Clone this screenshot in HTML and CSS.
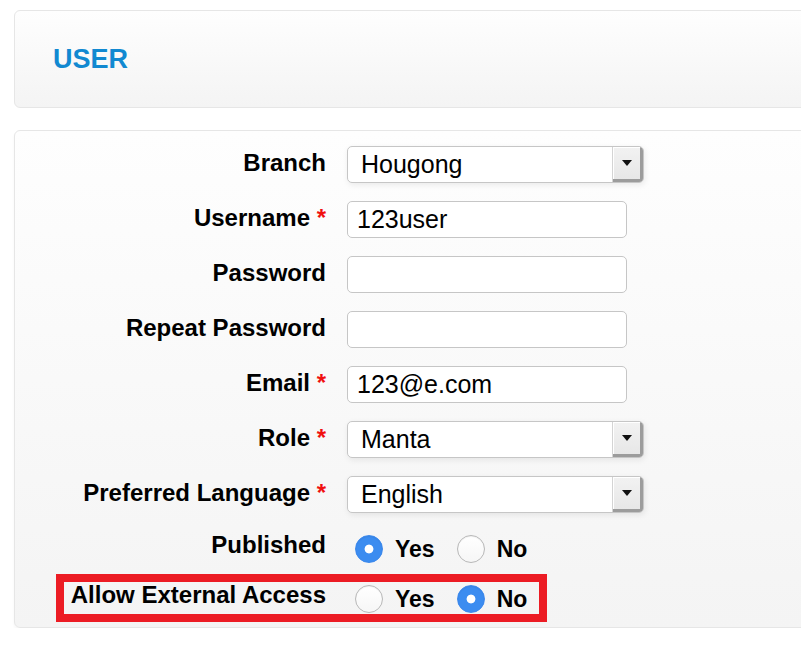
FILE: index.html
```html
<!DOCTYPE html>
<html lang="en">
<head>
    <meta charset="UTF-8">
    <meta name="viewport" content="width=device-width, initial-scale=1.0">
    <title>User</title>
    <link rel="stylesheet" href="styles.css">
</head>
<body>
    <div class="page">
        <div class="panel title-panel">
            <h2 class="title">USER</h2>
        </div>

        <form class="panel form-panel">
            <div class="row">
                <label class="label">Branch</label>
                <div class="select">
                    <select><option>Hougong</option></select>
                    <span class="arrow"></span>
                </div>
            </div>
            <div class="row">
                <label class="label">Username <span class="req">*</span></label>
                <input class="text" type="text" value="123user">
            </div>
            <div class="row">
                <label class="label">Password</label>
                <input class="text" type="password">
            </div>
            <div class="row">
                <label class="label">Repeat Password</label>
                <input class="text" type="password">
            </div>
            <div class="row">
                <label class="label">Email <span class="req">*</span></label>
                <input class="text" type="text" value="123@e.com">
            </div>
            <div class="row">
                <label class="label">Role <span class="req">*</span></label>
                <div class="select">
                    <select><option>Manta</option></select>
                    <span class="arrow"></span>
                </div>
            </div>
            <div class="row">
                <label class="label">Preferred Language <span class="req">*</span></label>
                <div class="select">
                    <select><option>English</option></select>
                    <span class="arrow"></span>
                </div>
            </div>
            <div class="row radio-row">
                <label class="label">Published</label>
                <div class="radios">
                    <label class="choice"><input type="radio" name="published" checked> Yes</label>
                    <label class="choice"><input type="radio" name="published"> No</label>
                </div>
            </div>
            <div class="row radio-row highlight">
                <label class="label">Allow External Access</label>
                <div class="radios">
                    <label class="choice"><input type="radio" name="external"> Yes</label>
                    <label class="choice"><input type="radio" name="external" checked> No</label>
                </div>
            </div>
        </form>
    </div>
</body>
</html>
```

FILE: styles.css
```css
body {
    margin: 0;
    background-color: #fff;
    font-family: "Liberation Sans", Arial, sans-serif;
    color: #000;
    overflow: hidden;
}

.page {
    padding: 10px 0 0 14px;
    margin-right: -12px;
}

.panel {
    border: 1px solid #e6e6e6;
    border-radius: 6px;
    background: linear-gradient(#fefefe, #f4f4f4);
}

.title-panel {
    height: 96px;
    display: flex;
    align-items: center;
    padding-left: 38px;
    margin-bottom: 22px;
}

.title {
    margin: 0;
    font-size: 27px;
    font-weight: bold;
    color: #1189d1;
}

.form-panel {
    display: flex;
    flex-direction: column;
    gap: 18px;
    padding: 15px 0 10px 0;
    box-shadow: 0 2px 3px rgba(0, 0, 0, 0.04);
}

.row {
    display: grid;
    grid-template-columns: 311px 1fr;
    column-gap: 21px;
    align-items: center;
}

.label {
    text-align: right;
    font-size: 24px;
    font-weight: bold;
    white-space: nowrap;
    margin-top: -3px;
}

.req {
    color: #f01010;
}

.text {
    box-sizing: border-box;
    width: 280px;
    height: 37px;
    margin: 0;
    padding: 0 9px;
    border: 1px solid #c6c6c6;
    border-radius: 5px;
    background: #fff;
    font-family: "Liberation Sans", Arial, sans-serif;
    font-size: 25px;
    color: #000;
    outline: none;
}

.select {
    box-sizing: border-box;
    display: flex;
    width: 297px;
    height: 37px;
    border: 1px solid #c6c6c6;
    border-radius: 5px;
    background: #fff;
    overflow: hidden;
    box-shadow: 1px 2px 6px rgba(0, 0, 0, 0.08);
}

.select select {
    flex: 1;
    appearance: none;
    -webkit-appearance: none;
    border: 0;
    margin: 0;
    padding: 0 0 2px 13px;
    background: transparent;
    font-family: "Liberation Sans", Arial, sans-serif;
    font-size: 25px;
    color: #000;
    outline: none;
}

.arrow {
    width: 30px;
    display: flex;
    align-items: center;
    justify-content: center;
    background: linear-gradient(#f2f2f2, #e6e6e6);
    border-left: 1px solid #d4d4d4;
    box-shadow: inset -3px -3px 0 #9c9c9c, inset 1px 1px 0 #fff;
}

.arrow::after {
    content: "";
    margin: 0 3px 3px 0;
    border-left: 5px solid transparent;
    border-right: 5px solid transparent;
    border-top: 6px solid #111;
}

.radio-row {
    height: 36px;
    align-items: start;
}

.radio-row .label {
    line-height: 27px;
    margin-top: 0;
}

.radios {
    display: flex;
    align-items: center;
    height: 36px;
    padding-left: 8px;
    gap: 22px;
}

.choice {
    display: flex;
    align-items: center;
    gap: 12px;
    font-size: 23px;
    font-weight: bold;
}

.choice input {
    appearance: none;
    -webkit-appearance: none;
    box-sizing: border-box;
    width: 28px;
    height: 28px;
    margin: 0;
    border: 1px solid #b8b8b8;
    border-radius: 50%;
    background: linear-gradient(#fff, #f6f6f6);
    box-shadow: inset 0 1px 1px rgba(0, 0, 0, 0.06);
}

.choice input:checked {
    border-color: #3a87ec;
    background: radial-gradient(circle, #fff 0, #fff 4px, #3b8cf0 4.8px);
}

.highlight {
    position: relative;
    margin-top: -4px;
}

.highlight::after {
    content: "";
    position: absolute;
    left: 41px;
    top: -7px;
    width: 475px;
    height: 32px;
    border: 8px solid #ec1c24;
    pointer-events: none;
}
```
